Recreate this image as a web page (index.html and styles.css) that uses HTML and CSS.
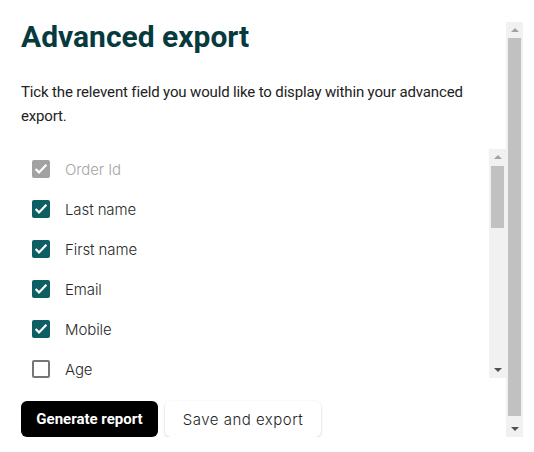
FILE: index.html
```html
<!DOCTYPE html>
<html lang="en">
<head>
<meta charset="utf-8">
<title>Advanced export</title>
<link rel="stylesheet" href="styles.css">
</head>
<body>
<div class="panel">
  <div class="panel-body">
    <h1 class="title">Advanced export</h1>
    <p class="intro">Tick the relevent field you would like to display within your advanced export.</p>
    <div class="fields-box">
      <ul class="fields">
        <li class="field"><input class="check" type="checkbox" checked disabled id="f1"><label class="field-label" for="f1">Order Id</label></li>
        <li class="field"><input class="check" type="checkbox" checked id="f2"><label class="field-label" for="f2">Last name</label></li>
        <li class="field"><input class="check" type="checkbox" checked id="f3"><label class="field-label" for="f3">First name</label></li>
        <li class="field"><input class="check" type="checkbox" checked id="f4"><label class="field-label" for="f4">Email</label></li>
        <li class="field"><input class="check" type="checkbox" checked id="f5"><label class="field-label" for="f5">Mobile</label></li>
        <li class="field"><input class="check" type="checkbox" id="f6"><label class="field-label" for="f6">Age</label></li>
      </ul>
      <div class="scrollbar" aria-hidden="true">
        <span class="sb-btn"><span class="sb-arrow-up"></span></span>
        <span class="sb-track"><span class="sb-thumb sb-thumb--list"></span></span>
        <span class="sb-btn"><span class="sb-arrow-down"></span></span>
      </div>
    </div>
    <div class="actions">
      <button class="btn btn-primary" type="button">Generate report</button>
      <button class="btn btn-secondary" type="button">Save and export</button>
    </div>
  </div>
  <div class="scrollbar scrollbar--panel" aria-hidden="true">
    <span class="sb-btn"><span class="sb-arrow-up"></span></span>
    <span class="sb-track"><span class="sb-thumb sb-thumb--panel"></span></span>
    <span class="sb-btn"><span class="sb-arrow-down"></span></span>
  </div>
</div>
</body>
</html>
```
FILE: styles.css
```css
html, body {
  margin: 0;
  padding: 0;
  background: #ffffff;
}

.panel {
  display: flex;
  margin: 19px 0 0 8px;
  width: 515px;
  height: 418px;
  overflow: hidden;
  font-family: Roboto, "Liberation Sans", sans-serif;
}

.panel-body {
  flex: 1;
  min-width: 0;
  padding: 3px 0 0 13px;
  overflow: hidden;
}

/* drawn classic scrollbar */
.scrollbar {
  flex: none;
  width: 17px;
  display: flex;
  flex-direction: column;
  background: #f1f1f1;
}

.scrollbar--panel {
  margin-top: 3px;
}

.sb-btn {
  flex: none;
  height: 16px;
  display: flex;
  align-items: center;
  justify-content: center;
}

.sb-arrow-up {
  width: 0;
  height: 0;
  border-left: 4px solid transparent;
  border-right: 4px solid transparent;
  border-bottom: 4px solid #a3a3a3;
}

.sb-arrow-down {
  width: 0;
  height: 0;
  border-left: 4px solid transparent;
  border-right: 4px solid transparent;
  border-top: 4px solid #505050;
}

.sb-track {
  flex: 1;
  display: flex;
  flex-direction: column;
  padding: 0 2px;
}

.sb-thumb {
  display: block;
  background: #c1c1c1;
}

.sb-thumb--panel {
  height: 378px;
}

.sb-thumb--list {
  margin-top: 1px;
  height: 62px;
}

.title {
  margin: 0;
  font-family: Roboto, "Liberation Sans", sans-serif;
  font-size: 30px;
  line-height: 30px;
  font-weight: 700;
  color: #073a3e;
}

.intro {
  margin: 28px 0 0 0;
  padding-right: 20px;
  font-size: 15px;
  line-height: 24px;
  letter-spacing: -0.15px;
  color: #222222;
}

.fields-box {
  display: flex;
  margin-top: 21px;
  height: 229px;
}

.fields {
  flex: 1;
  list-style: none;
  margin: 0;
  padding: 0 0 0 11px;
  overflow: hidden;
}

.field {
  display: flex;
  align-items: center;
  gap: 15px;
  height: 40px;
}

.check {
  appearance: none;
  -webkit-appearance: none;
  box-sizing: border-box;
  flex: none;
  width: 18px;
  height: 18px;
  margin: 0;
  border: 2px solid #767676;
  border-radius: 2px;
  background: #ffffff;
}

.check:checked {
  border-color: #0d5f63;
  background: #0d5f63 url("data:image/svg+xml,%3Csvg xmlns='http://www.w3.org/2000/svg' width='14' height='14'%3E%3Cpath d='M1.6 7 L5 10.4 L12.4 2.8' fill='none' stroke='%23ffffff' stroke-width='2.2'/%3E%3C/svg%3E") center / 14px 14px no-repeat;
}

.check:checked:disabled {
  border-color: #a2a2a2;
  background-color: #a2a2a2;
}

.field-label {
  font-family: Inter, "Noto Sans", sans-serif;
  font-size: 15px;
  font-weight: 300;
  letter-spacing: -0.1px;
  color: #2a2a2a;
}

.check:disabled + .field-label {
  color: #a5a5a5;
}

.actions {
  display: flex;
  gap: 7px;
  margin-top: 23px;
  padding-bottom: 8px;
}

.btn {
  box-sizing: border-box;
  height: 36px;
  border: none;
  border-radius: 6px;
  cursor: pointer;
}

.btn-primary {
  width: 137px;
  background: #000000;
  color: #ffffff;
  font-family: Roboto, "Liberation Sans", sans-serif;
  font-weight: 700;
  font-size: 15px;
}

.btn-secondary {
  width: 156px;
  background: #ffffff;
  color: #1e1e1e;
  font-family: Inter, "Noto Sans", sans-serif;
  font-size: 15px;
  font-weight: 300;
  letter-spacing: 0.5px;
  box-shadow: 0 1px 3px rgba(0, 0, 0, 0.18);
}
```
